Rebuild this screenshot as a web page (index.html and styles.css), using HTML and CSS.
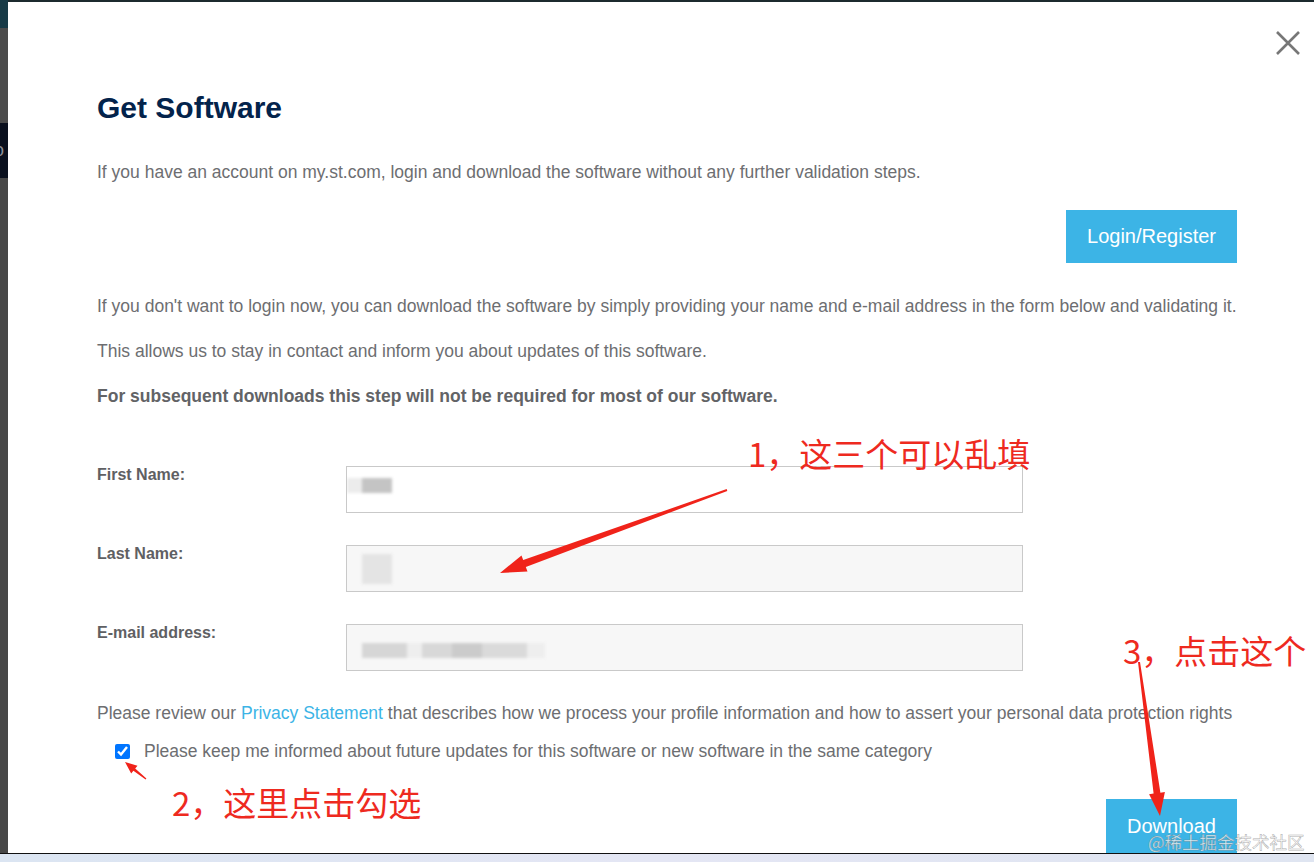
FILE: index.html
```html
<!DOCTYPE html>
<html lang="en">
<head>
    <meta charset="UTF-8">
    <meta name="viewport" content="width=device-width, initial-scale=1.0">
    <title>Get Software</title>
    <link rel="stylesheet" href="styles.css">
</head>
<body>
    <div class="page">
        <div class="screen">
            <div class="side">
                <div class="side-teal"></div>
                <div class="side-gray"></div>
                <div class="side-navy">o</div>
                <div class="side-rest"></div>
            </div>
            <div class="modal">
                <div class="modal-top">
                    <button class="close" aria-label="Close">
                        <svg width="26" height="26" viewBox="0 0 26 26">
                            <path d="M2 2 L24 24 M24 2 L2 24" stroke="#777" stroke-width="2.6" fill="none"/>
                        </svg>
                    </button>
                </div>
                <h1 class="title">Get Software</h1>
                <p class="text first">If you have an account on my.st.com, login and download the software without any further validation steps.</p>
                <div class="login-row">
                    <button class="btn login">Login/Register</button>
                </div>
                <p class="text">If you don't want to login now, you can download the software by simply providing your name and e-mail address in the form below and validating it.</p>
                <p class="text">This allows us to stay in contact and inform you about updates of this software.</p>
                <p class="text bold">For subsequent downloads this step will not be required for most of our software.</p>

                <div class="form">
                    <div class="field-row">
                        <label>First Name:</label>
                        <div class="field white">
                            <div class="blur fn">
                                <span class="b1"></span><span class="b2"></span>
                            </div>
                        </div>
                    </div>
                    <div class="field-row">
                        <label>Last Name:</label>
                        <div class="field">
                            <div class="blur ln"><span></span></div>
                        </div>
                    </div>
                    <div class="field-row">
                        <label>E-mail address:</label>
                        <div class="field">
                            <div class="blur em">
                                <span class="e1"></span><span class="e2"></span><span class="e3"></span><span class="e4"></span><span class="e5"></span><span class="e6"></span>
                            </div>
                        </div>
                    </div>
                </div>

                <p class="text privacy">Please review our <a href="#">Privacy Statement</a> that describes how we process your profile information and how to assert your personal data protection rights</p>
                <div class="check-row">
                    <input type="checkbox" id="keep" checked>
                    <label for="keep">Please keep me informed about future updates for this software or new software in the same category</label>
                </div>
                <div class="download-row">
                    <button class="btn download">Download</button>
                </div>
            </div>
        </div>
        <div class="bottom-line"></div>
        <div class="taskbar"></div>

        <div class="notes">
            <svg class="arrows" width="1314" height="862" viewBox="0 0 1314 862">
                <polygon fill="#f0231a" points="500,573 527.5,571.5 525.8,567 727.3,490.9 726.7,489.1 523.2,560 521.5,555.5"/>
                <polygon fill="#f0231a" points="1160,816 1164.9,792.1 1160.4,792.8 1140,661.9 1138,662.1 1153.6,793.6 1149.1,794.3"/>
                <polygon fill="#f0231a" points="125,762 131.2,773.5 133.4,770.8 145.6,779.5 146.4,778.5 135.2,768.4 137.5,765.7"/>
            </svg>
            <div class="note note-1">1，这三个可以乱填</div>
            <div class="note note-2">2，这里点击勾选</div>
            <div class="note note-3">3，点击这个</div>
            <div class="watermark">@稀土掘金技术社区</div>
        </div>
    </div>
</body>
</html>
```

FILE: styles.css
```css
* {
    margin: 0;
    padding: 0;
    box-sizing: border-box;
}
body {
    width: 1314px;
    height: 862px;
    overflow: hidden;
    font-family: "Liberation Sans", Arial, sans-serif;
    background-color: #474747;
}
.page {
    position: relative;
    display: flex;
    flex-direction: column;
    height: 862px;
}
.screen {
    display: flex;
    height: 853px;
}
.side {
    width: 8px;
    display: flex;
    flex-direction: column;
}
.side-teal {
    height: 28px;
    background-color: #173a46;
}
.side-gray {
    height: 95px;
    background-color: #4b4b4b;
}
.side-navy {
    height: 55px;
    background-color: #0a101e;
    color: #8a8f99;
    font-size: 18px;
    line-height: 55px;
    text-indent: -6px;
    overflow: hidden;
}
.side-rest {
    flex: 1;
    background-color: #474747;
}
.modal {
    flex: 1;
    background-color: #fff;
    border-top: 2px solid #1c2a2e;
    padding: 0 77px 0 89px;
    overflow: hidden;
}
.modal-top {
    display: flex;
    justify-content: flex-end;
    padding-top: 28px;
    margin-right: -64px;
}
.close {
    width: 26px;
    height: 26px;
    border: none;
    background: none;
    cursor: pointer;
}
.title {
    margin-top: 34px;
    font-size: 30px;
    line-height: 36px;
    font-weight: bold;
    color: #03234b;
}
.text {
    font-size: 17.5px;
    line-height: 24px;
    color: #6d6e71;
    margin-top: 21px;
    white-space: nowrap;
}
.text.first {
    margin-top: 34px;
}
.text.bold {
    font-weight: bold;
    color: #626366;
}
.login-row {
    display: flex;
    justify-content: flex-end;
    margin-top: 26px;
}
.login-row + .text {
    margin-top: 31px;
}
.btn {
    border: none;
    background-color: #3cb4e6;
    color: #fff;
    font-family: "Liberation Sans", Arial, sans-serif;
    font-size: 20px;
    cursor: pointer;
}
.login {
    width: 171px;
    height: 53px;
}
.form {
    margin-top: 58px;
    display: flex;
    flex-direction: column;
    gap: 32px;
}
.field-row {
    display: grid;
    grid-template-columns: 249px 677px;
    align-items: start;
}
.field-row label {
    font-size: 16px;
    line-height: 18px;
    font-weight: bold;
    color: #5f6063;
}
.field {
    height: 47px;
    border: 1px solid #c9c9c9;
    background-color: #f7f7f7;
    overflow: hidden;
}
.field.white {
    background-color: #fff;
}
.blur {
    display: flex;
    filter: blur(1.5px);
}
.blur span {
    display: block;
}
.fn {
    padding-top: 11px;
}
.fn .b1 {
    width: 15px;
    height: 15px;
    background-color: #ececec;
}
.fn .b2 {
    width: 30px;
    height: 15px;
    background-color: #c4c4c4;
}
.ln {
    padding: 8px 0 0 15px;
}
.ln span {
    width: 30px;
    height: 30px;
    background-color: #e4e4e4;
}
.em {
    padding: 18px 0 0 15px;
}
.em span {
    height: 15px;
}
.em .e1 { width: 45px; background-color: #d6d6d6; }
.em .e2 { width: 15px; background-color: #eeeeee; }
.em .e3 { width: 30px; background-color: #d8d8d8; }
.em .e4 { width: 30px; background-color: #cbcbcb; }
.em .e5 { width: 45px; background-color: #dadada; }
.em .e6 { width: 18px; background-color: #eeeeee; }
.text.privacy {
    margin-top: 30px;
}
.privacy a {
    color: #3cb4e6;
    text-decoration: none;
}
.check-row {
    display: flex;
    align-items: center;
    gap: 14px;
    margin-top: 14px;
    padding-left: 18px;
    font-size: 17.5px;
    line-height: 24px;
    color: #6d6e71;
}
.check-row input {
    width: 15px;
    height: 15px;
    accent-color: #0075ff;
}
.download-row {
    display: flex;
    justify-content: flex-end;
    margin-top: 36px;
}
.download {
    width: 131px;
    height: 54px;
}
.bottom-line {
    height: 1px;
    background-color: #111;
}
.taskbar {
    flex: 1;
    background: linear-gradient(90deg, #dbe5f2, #e4e6f4 50%, #dfe5f1);
}
.notes {
    position: absolute;
    inset: 0;
    pointer-events: none;
}
.arrows {
    position: absolute;
    left: 0;
    top: 0;
}
.note {
    position: absolute;
    font-family: "Noto Sans CJK SC", sans-serif;
    font-size: 33px;
    line-height: 1;
    color: #ee2a1f;
    white-space: nowrap;
}
.note-1 {
    left: 748px;
    top: 437px;
}
.note-2 {
    left: 172px;
    top: 786px;
}
.note-3 {
    left: 1123px;
    top: 634px;
}
.watermark {
    position: absolute;
    left: 1148px;
    top: 833px;
    font-family: "Noto Sans CJK SC", sans-serif;
    font-size: 17.5px;
    line-height: 1;
    color: rgba(255, 255, 255, 0.75);
    -webkit-text-stroke: 0.5px rgba(110, 110, 110, 0.6);
    white-space: nowrap;
}
```
